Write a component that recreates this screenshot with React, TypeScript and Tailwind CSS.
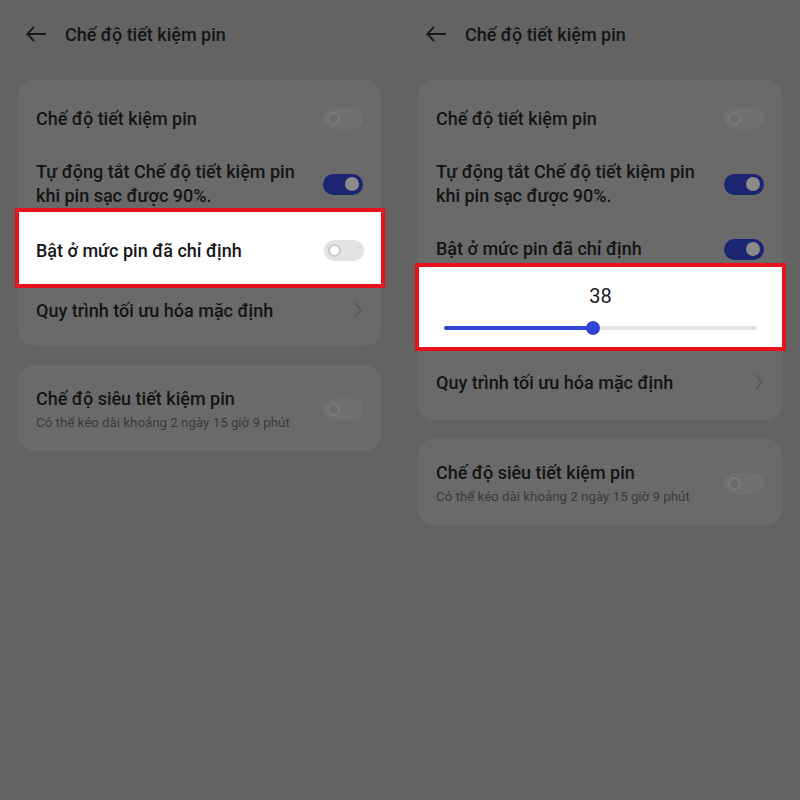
import React from "react";

function Toggle({ on, light }: { on?: boolean; light?: boolean }) {
  if (on) {
    return (
      <div className="w-[40px] h-[21px] rounded-full bg-[#1b2572] flex items-center justify-end pr-[4px] shrink-0">
        <div className="w-[14px] h-[14px] rounded-full bg-[#8b8b8b]" />
      </div>
    );
  }
  if (light) {
    return (
      <div className="w-[40px] h-[21px] rounded-full bg-[#e3e3e3] flex items-center pl-[4px] shrink-0">
        <div className="w-[13px] h-[13px] rounded-full bg-white border-[2px] border-[#c9c9c9]" />
      </div>
    );
  }
  return (
    <div className="w-[40px] h-[21px] rounded-full bg-[#707070] flex items-center pl-[4px] shrink-0">
      <div className="w-[13px] h-[13px] rounded-full bg-[#6c6c6c] border-[2px] border-[#7b7b7b]" />
    </div>
  );
}

function Chevron() {
  return (
    <svg width="8" height="16" viewBox="0 0 8 16" className="shrink-0 mr-[1px]">
      <path d="M1 1 L7 8 L1 15" fill="none" stroke="#565656" strokeWidth="1.4" />
    </svg>
  );
}

function Header() {
  return (
    <div className="h-[68px] flex items-center pl-[26px]">
      <svg width="21" height="16" viewBox="0 0 21 16">
        <path d="M20 8 H1.5 M8 1 L1.2 8 L8 15" fill="none" stroke="#1a1a1a" strokeWidth="1.8" />
      </svg>
      <span className="ml-[18px] text-[18px] font-medium text-[#151515]">Chế độ tiết kiệm pin</span>
    </div>
  );
}

function UltraCard() {
  return (
    <div className="mx-[18px] mt-[19px] rounded-[16px] bg-[#6a6a6a] px-[18px] pt-[22px] pb-[20px] flex items-center justify-between">
      <div>
        <div className="text-[18px] leading-[24px] font-medium text-[#141414]">Chế độ siêu tiết kiệm pin</div>
        <div className="mt-[4px] text-[13.3px] leading-[16px] text-[#3a3a3a]">Có thể kéo dài khoảng 2 ngày 15 giờ 9 phút</div>
      </div>
      <Toggle />
    </div>
  );
}

function AutoOffRow() {
  return (
    <div className="pt-[12px] px-[18px] flex items-center justify-between">
      <div className="text-[18px] leading-[24px] font-medium text-[#141414]">
        Tự động tắt Chế độ tiết kiệm pin
        <br />
        khi pin sạc được 90%.
      </div>
      <Toggle on />
    </div>
  );
}

function LeftPanel() {
  return (
    <div className="w-[400px] h-[800px] flex flex-col border-r border-[#676767]">
      <Header />
      <div className="mx-[18px] mt-[12px] rounded-[16px] bg-[#6a6a6a] pt-[8px] pb-[14px]">
        <div className="h-[60px] flex items-center justify-between px-[18px]">
          <span className="text-[18px] font-medium text-[#141414]">Chế độ tiết kiệm pin</span>
          <Toggle />
        </div>
        <AutoOffRow />
        <div className="-ml-[3px] -mr-[4px] h-[80px] border-[4px] border-[#e8111e] bg-white flex items-center justify-between pl-[17px] pr-[17px] pt-[4px]">
          <span className="text-[18px] font-medium text-[#161616]">Bật ở mức pin đã chỉ định</span>
          <Toggle light />
        </div>
        <div className="h-[44px] flex items-center justify-between px-[18px]">
          <span className="text-[18px] font-medium text-[#141414]">Quy trình tối ưu hóa mặc định</span>
          <Chevron />
        </div>
      </div>
      <UltraCard />
    </div>
  );
}

function RightPanel() {
  const fill = 47.6;
  return (
    <div className="w-[400px] h-[800px] flex flex-col">
      <Header />
      <div className="mx-[18px] mt-[12px] rounded-[16px] bg-[#6a6a6a] pt-[8px] pb-[7px]">
        <div className="h-[60px] flex items-center justify-between px-[18px]">
          <span className="text-[18px] font-medium text-[#141414]">Chế độ tiết kiệm pin</span>
          <Toggle />
        </div>
        <AutoOffRow />
        <div className="pt-[29px] pb-[2px] px-[18px] flex items-center justify-between">
          <span className="text-[18px] leading-[24px] font-medium text-[#141414]">Bật ở mức pin đã chỉ định</span>
          <Toggle on />
        </div>
        <div className="-ml-[3px] -mr-[4px] h-[88px] border-[4px] border-[#e8111e] bg-white flex flex-col pt-[15px] px-[25px]">
          <div className="text-center text-[20px] leading-[28px] text-[#1a1a1a]">38</div>
          <div className="relative mt-[11px] h-[14px] flex items-center">
            <div className="w-full h-[4px] rounded-full bg-[#e2e2e2]" />
            <div className="absolute left-0 top-[5px] h-[4px] rounded-full bg-[#3143d6]" style={{ width: fill + "%" }} />
            <div
              className="absolute top-0 w-[14px] h-[14px] rounded-full bg-[#3143d6] -translate-x-1/2"
              style={{ left: fill + "%" }}
            />
          </div>
        </div>
        <div className="h-[62px] flex items-center justify-between px-[18px]">
          <span className="text-[18px] font-medium text-[#141414]">Quy trình tối ưu hóa mặc định</span>
          <Chevron />
        </div>
      </div>
      <UltraCard />
    </div>
  );
}

export default function App() {
  return (
    <div className="w-[800px] h-[800px] bg-[#636363] flex overflow-hidden font-[family-name:Roboto,'Noto_Sans',sans-serif]">
      <LeftPanel />
      <RightPanel />
    </div>
  );
}
